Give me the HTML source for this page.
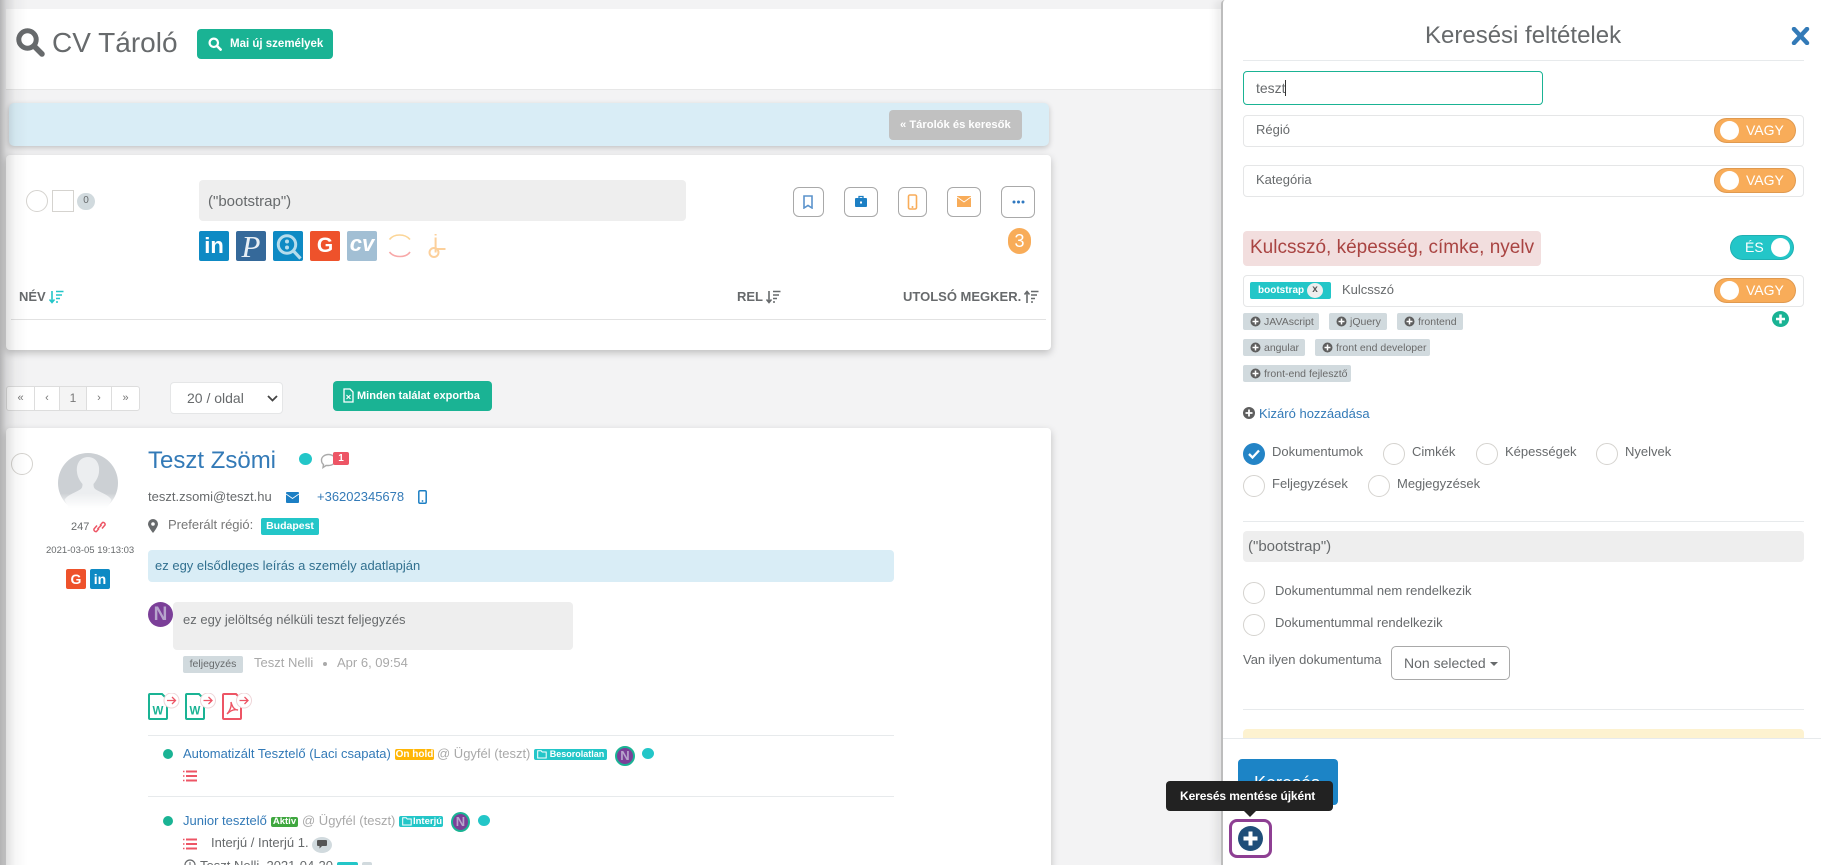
<!DOCTYPE html>
<html lang="hu"><head><meta charset="utf-8"><title>CV Tároló</title>
<style>
*{box-sizing:border-box}
html,body{margin:0;padding:0;width:1821px;height:865px;overflow:hidden}
body{background:#f3f3f4;font-family:"Liberation Sans",sans-serif;color:#676a6c;font-size:13px}
#root{position:absolute;left:0;top:0;width:1821px;height:865px;overflow:hidden;background:#f3f3f4}
.a{position:absolute}
.t{position:absolute;white-space:nowrap}
.card{position:absolute;background:#fff;border-radius:4px;box-shadow:0 3px 8px rgba(0,0,0,.22)}
.ib{position:absolute;border:1px solid #a9a9a9;border-radius:6px;background:#fff}
.c{position:absolute;width:22px;height:22px;border:1px solid #d5d3cf;border-radius:50%;background:#fff}
.box{position:absolute;left:1243px;width:561px;height:32px;border:1px solid #e5e6e7;border-radius:4px;background:#fff}
.tg{position:absolute;left:1714px;width:82px;height:25px;border-radius:13px;background:#f8ac59;border:1px solid #e09a50;color:#fff;font-size:14px;line-height:23px}
.tg i{position:absolute;left:5px;top:2px;width:19px;height:19px;border-radius:50%;background:#fff}
.tg b{position:absolute;left:31px;top:0;font-weight:normal}
.chip{position:absolute;height:17px;background:#d1dade;border-radius:2px;font-size:10.5px;line-height:18px;color:#6a6a6a;white-space:nowrap;padding-left:21px}
.chip svg{position:absolute;left:7px;top:3px}
.sq{position:absolute;width:30px;height:30px;border-radius:2px;color:#fff;text-align:center;font-weight:bold}
.bd{position:absolute;color:#fff;font-weight:bold;border-radius:2px;white-space:nowrap;text-align:center}
.pg{position:absolute;top:386px;height:25px;border:1px solid #ddd;background:#fff;text-align:center;line-height:22px;font-size:11px;color:#777}
.l{color:#337ab7}
.g{color:#a9a9a9}
.n{position:absolute;border-radius:50%;background:#7b3f98;color:#b7a4cc;text-align:center;font-weight:bold}
.dot{position:absolute;border-radius:50%}
hr{position:absolute;margin:0;border:0;height:1px;background:#e7eaec}
</style></head>
<body>
<div id="root">
<!-- header -->
<div class="a" style="left:6px;top:9px;width:1215px;height:81px;background:#fff;border-bottom:1px solid #e7e7e7"></div>
<svg class="a" style="left:16px;top:28px" width="29" height="29" viewBox="0 0 29 29"><circle cx="11.5" cy="11.5" r="8.7" fill="none" stroke="#676a6c" stroke-width="5"/><path d="M18 18l8 8" stroke="#676a6c" stroke-width="5.5" stroke-linecap="round"/></svg>
<div class="t" style="left:52px;top:26px;font-size:28px;line-height:34px;color:#676a6c">CV Tároló</div>
<div class="a" style="left:197px;top:29px;width:136px;height:30px;background:#1ab394;border-radius:4px"></div>
<svg class="a" style="left:208px;top:37px" width="14" height="14" viewBox="0 0 14 14"><circle cx="5.8" cy="5.8" r="4.2" fill="none" stroke="#fff" stroke-width="2.2"/><path d="M9 9l3.6 3.6" stroke="#fff" stroke-width="2.6" stroke-linecap="round"/></svg>
<div class="t" style="left:230px;top:36px;font-size:11.5px;line-height:16px;font-weight:bold;color:#fff">Mai új személyek</div>

<!-- blue bar -->
<div class="a" style="left:9px;top:103px;width:1040px;height:43px;background:#d9edf6;border-radius:5px;box-shadow:0 2px 6px rgba(0,0,0,.2)"></div>
<div class="a" style="left:889px;top:110px;width:133px;height:30px;background:#c1c1c1;border-radius:4px"></div>
<div class="t" style="left:900px;top:117px;font-size:11.2px;line-height:16px;font-weight:bold;color:#fff">« Tárolók és keresők</div>

<!-- search card -->
<div class="card" style="left:6px;top:155px;width:1045px;height:195px"></div>
<div class="c" style="left:26px;top:190px"></div>
<div class="a" style="left:52px;top:190px;width:22px;height:22px;border:1px solid #d5d3cf;background:#fff"></div>
<div class="a" style="left:77px;top:193px;width:18px;height:17px;background:#d1dade;border-radius:9px;font-size:10px;line-height:16px;text-align:center">0</div>
<div class="a" style="left:199px;top:180px;width:487px;height:41px;background:#eee;border-radius:4px"></div>
<div class="t" style="left:208px;top:193px;font-size:15px;line-height:18px">("bootstrap")</div>

<div class="sq" style="left:199px;top:231px;background:#0e8ac4;font-size:22px;line-height:30px">in</div>
<div class="sq" style="left:236px;top:231px;background:#35699a;font:italic 31px/31px 'Liberation Serif',serif;color:#e8eff5">P</div>
<div class="sq" style="left:273px;top:231px;background:#0e8ac4"></div>
<svg class="a" style="left:273px;top:231px" width="30" height="30" viewBox="0 0 30 30"><circle cx="14" cy="13.5" r="8.7" fill="none" stroke="#b5dcec" stroke-width="3"/><circle cx="14" cy="10.5" r="2" fill="#b5dcec"/><circle cx="14" cy="16.5" r="2" fill="#b5dcec"/><path d="M20.5 20l7 7.5" stroke="#b5dcec" stroke-width="3.2"/></svg>
<div class="sq" style="left:310px;top:231px;background:#ee522b;font-size:21px;line-height:30px">G</div>
<div class="sq" style="left:347px;top:231px;background:#a2bfd4;font-size:22px;line-height:26px;font-style:italic">cv</div>
<svg class="a" style="left:387px;top:233px" width="26" height="26" viewBox="0 0 26 26" fill="none"><path d="M2.500 6.500C7 .5 18 .5 23 6.500" stroke="#fbd597" stroke-width="1.600"/><path d="M2.500 19C7 25 19 25 23 19" stroke="#f8a8a8" stroke-width="1.600"/></svg>
<svg class="a" style="left:427px;top:234px" width="19" height="25" viewBox="0 0 19 25" fill="none" stroke="#fcd09b" stroke-width="2"><path d="M8.600 0v1.500M8.600 3.500v15"/><circle cx="7" cy="18.500" r="4.500"/><path d="M8.600 15H18.500"/></svg>

<div class="ib" style="left:793px;top:187px;width:31px;height:30px"></div>
<svg class="a" style="left:802px;top:195px" width="12" height="14" viewBox="0 0 12 14"><path d="M2 1h8v12l-4-2.500L2 13z" fill="none" stroke="#5b93cc" stroke-width="1.600"/></svg>
<div class="ib" style="left:844px;top:187px;width:34px;height:30px"></div>
<svg class="a" style="left:854px;top:195px" width="14" height="13" viewBox="0 0 14 13"><path d="M5 3V1.500h4V3" fill="none" stroke="#1c7fc4" stroke-width="1.300"/><rect x="1" y="3" width="12" height="9" rx="1" fill="#1c7fc4"/><rect x="6" y="6.500" width="2" height="2" fill="#fff"/></svg>
<div class="ib" style="left:898px;top:187px;width:29px;height:30px"></div>
<svg class="a" style="left:907px;top:194px" width="11" height="16" viewBox="0 0 11 16"><rect x="1.500" y="1" width="8" height="14" rx="1.500" fill="none" stroke="#f8ac59" stroke-width="1.600"/><circle cx="5.500" cy="13" r="1" fill="#f8ac59"/></svg>
<div class="ib" style="left:947px;top:187px;width:34px;height:30px"></div>
<svg class="a" style="left:957px;top:196px" width="14" height="11" viewBox="0 0 14 11"><rect width="14" height="11" fill="#f8ac59"/><path d="M0 1l7 5 7-5" fill="none" stroke="#fff" stroke-width=".9"/></svg>
<div class="ib" style="left:1001px;top:186px;width:34px;height:32px"></div>
<svg class="a" style="left:1012px;top:200px" width="13" height="4" viewBox="0 0 13 4" fill="#2f78c0"><circle cx="2" cy="2" r="1.500"/><circle cx="6.500" cy="2" r="1.500"/><circle cx="11" cy="2" r="1.500"/></svg>
<div class="a" style="left:1008px;top:228px;width:23px;height:26px;background:#f8ac59;border-radius:12px;color:#fff;text-align:center;font-size:18px;line-height:26px">3</div>

<div class="t" style="left:19px;top:289px;font-size:13px;line-height:16px;font-weight:bold">NÉV</div>
<svg class="a" style="left:49px;top:290px" width="15" height="14" viewBox="0 0 15 14" stroke="#23c6c8" stroke-width="1.600" fill="none"><path d="M3 1v11M.5 9.500L3 12.500l2.500-3M7 1.500h7.500M7 5h6M7 8.500h4M7 12h2"/></svg>
<div class="t" style="left:737px;top:289px;font-size:13px;line-height:16px;font-weight:bold">REL</div>
<svg class="a" style="left:766px;top:290px" width="15" height="14" viewBox="0 0 15 14" stroke="#676a6c" stroke-width="1.600" fill="none"><path d="M3 1v11M.5 9.500L3 12.500l2.500-3M7 1.500h7.500M7 5h6M7 8.500h4M7 12h2"/></svg>
<div class="t" style="left:903px;top:289px;font-size:13px;line-height:16px;font-weight:bold">UTOLSÓ MEGKER.</div>
<svg class="a" style="left:1024px;top:290px" width="15" height="14" viewBox="0 0 15 14" stroke="#676a6c" stroke-width="1.600" fill="none"><path d="M3 13V2M.5 4.500L3 1.500l2.500 3M7 1.500h7.500M7 5h6M7 8.500h4M7 12h2"/></svg>
<hr style="left:11px;top:319px;width:1035px;background:#e2e2e2">

<!-- pagination -->
<div class="pg" style="left:6px;width:29px;border-radius:3px 0 0 3px">«</div>
<div class="pg" style="left:34px;width:26px">‹</div>
<div class="pg" style="left:59px;width:28px;background:#f4f4f4;font-size:12px">1</div>
<div class="pg" style="left:86px;width:26px">›</div>
<div class="pg" style="left:111px;width:29px;border-radius:0 3px 3px 0">»</div>
<div class="a" style="left:170px;top:382px;width:113px;height:32px;background:#fff;border:1px solid #e5e6e7;border-radius:4px"></div>
<div class="t" style="left:187px;top:389px;font-size:14px;line-height:18px">20 / oldal</div>
<svg class="a" style="left:267px;top:395px" width="11" height="7" viewBox="0 0 11 7"><path d="M1 1l4.500 4.500L10 1" fill="none" stroke="#444" stroke-width="1.800"/></svg>
<div class="a" style="left:333px;top:381px;width:159px;height:30px;background:#1ab394;border-radius:4px"></div>
<svg class="a" style="left:343px;top:388px" width="11" height="15" viewBox="0 0 11 15"><path d="M1 1h6l3 3v10H1z" fill="none" stroke="#fff" stroke-width="1.300"/><path d="M3.500 7l4 4M7.500 7l-4 4" stroke="#fff" stroke-width="1.100"/></svg>
<div class="t" style="left:357px;top:388px;font-size:11px;line-height:16px;font-weight:bold;color:#fff">Minden találat exportba</div>

<!-- result card -->
<div class="card" style="left:6px;top:428px;width:1045px;height:460px"></div>
<div class="c" style="left:11px;top:453px"></div>
<svg class="a" style="left:58px;top:453px" width="60" height="56" viewBox="0 0 60 56">
<defs><linearGradient id="f" x1="0" y1="0" x2="0" y2="1"><stop offset=".72" stop-color="#fff" stop-opacity="0"/><stop offset=".98" stop-color="#fff"/></linearGradient></defs>
<circle cx="30" cy="30" r="30" fill="#ccd0d4"/>
<path d="M30 4c-8 0-12 7-11 15 .4 5 3 9 5.500 12 0 4-1 5-5 7-6 3-11 5-13 9l5 9h37l5-9c-2-4-7-6-13-9-4-2-5-3-5-7 2.500-3 5-7 5.500-12 1-8-3-15-11-15z" fill="#eceef0"/>
<rect width="60" height="56" fill="url(#f)"/></svg>
<div class="t" style="left:71px;top:520px;font-size:11px;line-height:14px">247</div>
<svg class="a" style="left:93px;top:520px" width="13" height="14" viewBox="0 0 13 14" fill="none" stroke="#ed5565" stroke-width="1.500"><path d="M6 8.500l-2.500 3a2 2 0 0 1-2.500-2.500l3-3.500"/><path d="M7 5.500l2.500-3a2 2 0 0 1 2.500 2.500l-3 3.500"/><path d="M4.500 9l4-4"/></svg>
<div class="t" style="left:46px;top:545px;font-size:9.500px;line-height:12px">2021-03-05 19:13:03</div>
<div class="sq" style="left:66px;top:569px;width:20px;height:20px;background:#ee522b;font-size:14px;line-height:20px">G</div>
<div class="sq" style="left:90px;top:569px;width:20px;height:20px;background:#0e8ac4;font-size:14px;line-height:20px">in</div>

<div class="t l" style="left:148px;top:447px;font-size:24px;line-height:28px">Teszt Zsömi</div>
<div class="dot" style="left:299px;top:453px;width:13px;height:12px;background:#23c6c8"></div>
<svg class="a" style="left:320px;top:453px" width="17" height="16" viewBox="0 0 17 16"><path d="M8.500 1.500c4 0 7 2.500 7 5.500s-3 5.500-7 5.500H6l-3 2 .5-3C2 10.500 1.500 9 1.500 7c0-3 3-5.500 7-5.500z" fill="none" stroke="#aaa" stroke-width="1.400"/></svg>
<div class="a" style="left:333px;top:452px;width:16px;height:13px;background:#ed5565;border-radius:2px;color:#fff;font-size:10px;font-weight:bold;line-height:13px;text-align:center">1</div>

<div class="t" style="left:148px;top:489px;font-size:13px;line-height:16px">teszt.zsomi@teszt.hu</div>
<svg class="a" style="left:286px;top:492px" width="13" height="11" viewBox="0 0 13 11"><rect width="13" height="11" rx="1" fill="#1c7fc4"/><path d="M0 2l6.500 4.500L13 2" fill="none" stroke="#fff" stroke-width=".9"/></svg>
<div class="t l" style="left:317px;top:489px;font-size:13px;line-height:16px">+36202345678</div>
<svg class="a" style="left:418px;top:490px" width="9" height="14" viewBox="0 0 9 14"><rect x=".8" y=".8" width="7.400" height="12.400" rx="1.200" fill="none" stroke="#1c7fc4" stroke-width="1.500"/><circle cx="4.500" cy="11" r=".9" fill="#1c7fc4"/></svg>
<svg class="a" style="left:148px;top:519px" width="10" height="14" viewBox="0 0 10 14"><path d="M5 0a5 5 0 0 0-5 5c0 3 5 9 5 9s5-6 5-9a5 5 0 0 0-5-5z" fill="#676a6c"/><circle cx="5" cy="5" r="1.800" fill="#fff"/></svg>
<div class="t" style="left:168px;top:517px;font-size:13px;line-height:16px;color:#777">Preferált régió:</div>
<div class="bd" style="left:261px;top:518px;width:58px;height:17px;background:#23c6c8;font-size:10.500px;line-height:17px">Budapest</div>
<div class="a" style="left:148px;top:550px;width:746px;height:32px;background:#d9edf6;border-radius:4px"></div>
<div class="t" style="left:155px;top:558px;font-size:13px;line-height:16px;color:#31708f">ez egy elsődleges leírás a személy adatlapján</div>

<div class="n" style="left:148px;top:602px;width:25px;height:25px;font-size:19px;line-height:25px">N</div>
<div class="a" style="left:173px;top:602px;width:400px;height:48px;background:#eee;border-radius:4px"></div>
<div class="t" style="left:183px;top:612px;font-size:13px;line-height:16px">ez egy jelöltség nélküli teszt feljegyzés</div>
<div class="a" style="left:183px;top:656px;width:60px;height:17px;background:#d1dade;border-radius:2px;font-size:10.500px;line-height:17px;text-align:center">feljegyzés</div>
<div class="t g" style="left:254px;top:655px;font-size:13px;line-height:16px">Teszt Nelli</div>
<div class="dot" style="left:323px;top:662px;width:4px;height:4px;background:#aaa"></div>
<div class="t g" style="left:337px;top:655px;font-size:13px;line-height:16px">Apr 6, 09:54</div>

<svg class="a" style="left:148px;top:693px" width="32" height="27" viewBox="0 0 32 27"><path d="M1 8V2a1 1 0 0 1 1-1h12l5 5v19a1 1 0 0 1-1 1H2a1 1 0 0 1-1-1z" fill="#fff" stroke="#1ab394" stroke-width="2"/><text x="4.500" y="21.500" font-family="Liberation Sans" font-size="11.500" font-weight="bold" fill="#1ab394">W</text><circle cx="23.500" cy="7.500" r="7.500" fill="#fff" stroke="#eed5d8"/><path d="M19 7.500h8M24 4L27.500 7.500 24 11" fill="none" stroke="#ed5565" stroke-width="1.300"/></svg>
<svg class="a" style="left:185px;top:693px" width="32" height="27" viewBox="0 0 32 27"><path d="M1 8V2a1 1 0 0 1 1-1h12l5 5v19a1 1 0 0 1-1 1H2a1 1 0 0 1-1-1z" fill="#fff" stroke="#1ab394" stroke-width="2"/><text x="4.500" y="21.500" font-family="Liberation Sans" font-size="11.500" font-weight="bold" fill="#1ab394">W</text><circle cx="23" cy="7.500" r="7.500" fill="#fff" stroke="#eed5d8"/><path d="M18.500 7.500h8M23.500 4L27 7.500 23.500 11" fill="none" stroke="#ed5565" stroke-width="1.300"/></svg>
<svg class="a" style="left:222px;top:693px" width="32" height="27" viewBox="0 0 32 27"><path d="M1 8V2a1 1 0 0 1 1-1h12l5 5v19a1 1 0 0 1-1 1H2a1 1 0 0 1-1-1z" fill="#fff" stroke="#ed5565" stroke-width="2"/><path d="M9 9c1 5-2 10-4 12 3-3 7-5 11-4-4 0-6-4-7-8z" fill="none" stroke="#ed5565" stroke-width="1.400"/><circle cx="22" cy="7.500" r="7.500" fill="#fff" stroke="#eed5d8"/><path d="M17.500 7.500h8M22.500 4L26 7.500 22.500 11" fill="none" stroke="#ed5565" stroke-width="1.300"/></svg>

<hr style="left:148px;top:735px;width:746px">
<div class="dot" style="left:163px;top:749px;width:10px;height:10px;background:#1ab394"></div>
<div class="t l" style="left:183px;top:746px;font-size:13px;line-height:16px">Automatizált Tesztelő (Laci csapata)</div>
<div class="bd" style="left:395px;top:749px;width:39px;height:11px;background:#ffb606;font-size:10px;line-height:11px">On hold</div>
<div class="t g" style="left:437px;top:746px;font-size:13px;line-height:16px">@ Ügyfél (teszt)</div>
<div class="bd" style="left:534px;top:749px;width:73px;height:11px;background:#23c6c8;font-size:9px;line-height:11px;padding-left:13px">Besorolatlan</div>
<svg class="a" style="left:537px;top:750px" width="10" height="9" viewBox="0 0 10 9"><path d="M.7.700h3.500l1 1.300h4v6H.7z" fill="none" stroke="#fff"/></svg>
<div class="n" style="left:615px;top:746px;width:20px;height:20px;border:2px solid #1ab394;font-size:13px;line-height:16px">N</div>
<div class="dot" style="left:642px;top:748px;width:12px;height:11px;background:#23c6c8"></div>
<svg class="a" style="left:183px;top:770px" width="14" height="12" viewBox="0 0 14 12" stroke="#ed5565" stroke-width="2"><path d="M3 1.500h11M3 6h11M3 10.500h11"/><path d="M0 1.500h1.500M0 6h1.500M0 10.500h1.500" stroke-width="1.500"/></svg>

<hr style="left:148px;top:796px;width:746px">
<div class="dot" style="left:163px;top:816px;width:10px;height:10px;background:#1ab394"></div>
<div class="t l" style="left:183px;top:813px;font-size:13px;line-height:16px">Junior tesztelő</div>
<div class="bd" style="left:271px;top:817px;width:27px;height:10px;background:#3fa73f;font-size:9.500px;line-height:10px">Aktív</div>
<div class="t g" style="left:302px;top:813px;font-size:13px;line-height:16px">@ Ügyfél (teszt)</div>
<div class="bd" style="left:399px;top:816px;width:44px;height:11px;background:#23c6c8;font-size:9.500px;line-height:11px;padding-left:13px">Interjú</div>
<svg class="a" style="left:402px;top:817px" width="10" height="9" viewBox="0 0 10 9"><path d="M.7.700h3.500l1 1.300h4v6H.7z" fill="none" stroke="#fff"/></svg>
<div class="n" style="left:451px;top:812px;width:19px;height:20px;border:2px solid #1ab394;font-size:13px;line-height:16px">N</div>
<div class="dot" style="left:478px;top:815px;width:12px;height:11px;background:#23c6c8"></div>
<svg class="a" style="left:183px;top:838px" width="14" height="12" viewBox="0 0 14 12" stroke="#ed5565" stroke-width="2"><path d="M3 1.500h11M3 6h11M3 10.500h11"/><path d="M0 1.500h1.500M0 6h1.500M0 10.500h1.500" stroke-width="1.500"/></svg>
<div class="t" style="left:211px;top:835px;font-size:13px;line-height:16px">Interjú / Interjú 1.</div>
<div class="a" style="left:312px;top:837px;width:20px;height:16px;background:#d1dade;border-radius:50%"></div>
<svg class="a" style="left:317px;top:840px" width="10" height="9" viewBox="0 0 10 9"><path d="M1 0h8a1 1 0 0 1 1 1v4a1 1 0 0 1-1 1H5L2.500 8.500V6H1a1 1 0 0 1-1-1V1a1 1 0 0 1 1-1z" fill="#555"/></svg>
<svg class="a" style="left:184px;top:859px" width="12" height="12" viewBox="0 0 12 12"><circle cx="6" cy="6" r="5" fill="none" stroke="#676a6c" stroke-width="1.200"/><path d="M6 3v3.500" stroke="#676a6c"/></svg>
<div class="t" style="left:200px;top:858px;font-size:13px;line-height:16px">Teszt Nelli, 2021-04-20</div>
<div class="a" style="left:337px;top:862px;width:21px;height:10px;background:#23c6c8;border-radius:2px"></div>
<div class="a" style="left:362px;top:862px;width:10px;height:10px;background:#d1dade;border-radius:2px"></div>

<!-- left shadow -->
<div class="a" style="left:0;top:0;width:28px;height:865px;background:linear-gradient(to right,rgba(0,0,0,.26),rgba(0,0,0,.12) 22%,rgba(0,0,0,.03) 55%,rgba(0,0,0,0))"></div>

<!-- right panel -->
<div class="a" style="left:1221px;top:0;width:600px;height:865px;background:#fff;border-left:2px solid #bdbdbd;box-shadow:-6px 0 8px rgba(0,0,0,.07);border-top-left-radius:4px"></div>
<div class="t" style="left:1425px;top:22px;font-size:24px;line-height:28px">Keresési feltételek</div>
<svg class="a" style="left:1791px;top:27px" width="19" height="18" viewBox="0 0 19 18"><path d="M3 2l13 14M16 2L3 16" stroke="#337ab7" stroke-width="4.500" stroke-linecap="round"/></svg>
<hr style="left:1243px;top:60px;width:561px">
<div class="a" style="left:1243px;top:71px;width:300px;height:34px;border:1px solid #1ab394;border-radius:4px"></div>
<div class="t" style="left:1256px;top:79px;font-size:14px;line-height:18px">teszt</div>
<div class="a" style="left:1285px;top:80px;width:1px;height:16px;background:#333"></div>

<div class="box" style="top:115px"></div>
<div class="t" style="left:1256px;top:122px;font-size:13px;line-height:16px">Régió</div>
<div class="tg" style="top:118px"><i></i><b>VAGY</b></div>
<div class="box" style="top:165px"></div>
<div class="t" style="left:1256px;top:172px;font-size:13px;line-height:16px">Kategória</div>
<div class="tg" style="top:168px"><i></i><b>VAGY</b></div>

<div class="a" style="left:1243px;top:231px;width:298px;height:35px;background:#f2dede;border-radius:4px"></div>
<div class="t" style="left:1250px;top:236px;font-size:19px;line-height:24px;color:#a94442">Kulcsszó, képesség, címke, nyelv</div>
<div class="a" style="left:1730px;top:235px;width:64px;height:25px;border-radius:13px;background:#23c6c8;border:1px solid #1fb0b2"></div>
<div class="t" style="left:1745px;top:238px;font-size:14px;line-height:18px;color:#fff">ÉS</div>
<div class="a" style="left:1771px;top:238px;width:19px;height:19px;background:#fff;border-radius:50%"></div>

<div class="box" style="top:275px"></div>
<div class="a" style="left:1250px;top:282px;width:81px;height:17px;background:#23c6c8;border-radius:2px"></div>
<div class="t" style="left:1258px;top:283px;font-size:10px;line-height:15px;font-weight:bold;color:#fff">bootstrap</div>
<div class="a" style="left:1307px;top:283px;width:16px;height:15px;background:#eee;border-radius:50%;font-size:10px;line-height:13px;font-weight:bold;text-align:center;color:#555">x</div>
<div class="t" style="left:1342px;top:282px;font-size:13px;line-height:16px">Kulcsszó</div>
<div class="tg" style="top:278px"><i></i><b>VAGY</b></div>

<div class="chip" style="left:1243px;top:313px;width:76px"><svg width="11" height="11" viewBox="0 0 11 11"><circle cx="5.500" cy="5.500" r="5" fill="#5e5e5e"/><path d="M5.500 2.500v6M2.500 5.500h6" stroke="#fff" stroke-width="1.500"/></svg>JAVAscript</div>
<div class="chip" style="left:1329px;top:313px;width:58px"><svg width="11" height="11" viewBox="0 0 11 11"><circle cx="5.500" cy="5.500" r="5" fill="#5e5e5e"/><path d="M5.500 2.500v6M2.500 5.500h6" stroke="#fff" stroke-width="1.500"/></svg>jQuery</div>
<div class="chip" style="left:1397px;top:313px;width:66px"><svg width="11" height="11" viewBox="0 0 11 11"><circle cx="5.500" cy="5.500" r="5" fill="#5e5e5e"/><path d="M5.500 2.500v6M2.500 5.500h6" stroke="#fff" stroke-width="1.500"/></svg>frontend</div>
<div class="chip" style="left:1243px;top:339px;width:62px"><svg width="11" height="11" viewBox="0 0 11 11"><circle cx="5.500" cy="5.500" r="5" fill="#5e5e5e"/><path d="M5.500 2.500v6M2.500 5.500h6" stroke="#fff" stroke-width="1.500"/></svg>angular</div>
<div class="chip" style="left:1315px;top:339px;width:115px"><svg width="11" height="11" viewBox="0 0 11 11"><circle cx="5.500" cy="5.500" r="5" fill="#5e5e5e"/><path d="M5.500 2.500v6M2.500 5.500h6" stroke="#fff" stroke-width="1.500"/></svg>front end developer</div>
<div class="chip" style="left:1243px;top:365px;width:108px"><svg width="11" height="11" viewBox="0 0 11 11"><circle cx="5.500" cy="5.500" r="5" fill="#5e5e5e"/><path d="M5.500 2.500v6M2.500 5.500h6" stroke="#fff" stroke-width="1.500"/></svg>front-end fejlesztő</div>
<svg class="a" style="left:1772px;top:311px" width="17" height="16" viewBox="0 0 17 16"><ellipse cx="8.500" cy="8" rx="8.500" ry="8" fill="#1ab394"/><path d="M8.500 3.500v9M4 8h9" stroke="#fff" stroke-width="2.500"/></svg>

<svg class="a" style="left:1243px;top:407px" width="12" height="12" viewBox="0 0 12 12"><circle cx="6" cy="6" r="6" fill="#5e5e5e"/><path d="M6 2.500v7M2.500 6h7" stroke="#fff" stroke-width="1.800"/></svg>
<div class="t l" style="left:1259px;top:406px;font-size:13px;line-height:16px">Kizáró hozzáadása</div>

<div class="dot" style="left:1243px;top:443px;width:22px;height:22px;background:#2484c6"></div>
<svg class="a" style="left:1248px;top:449px" width="12" height="10" viewBox="0 0 12 10"><path d="M1 5l3.500 3.500L11 1.500" fill="none" stroke="#fff" stroke-width="2.300"/></svg>
<div class="t" style="left:1272px;top:444px;font-size:13px;line-height:16px">Dokumentumok</div>
<div class="c" style="left:1383px;top:443px"></div>
<div class="t" style="left:1412px;top:444px;font-size:13px;line-height:16px">Cimkék</div>
<div class="c" style="left:1476px;top:443px"></div>
<div class="t" style="left:1505px;top:444px;font-size:13px;line-height:16px">Képességek</div>
<div class="c" style="left:1596px;top:443px"></div>
<div class="t" style="left:1625px;top:444px;font-size:13px;line-height:16px">Nyelvek</div>
<div class="c" style="left:1243px;top:475px"></div>
<div class="t" style="left:1272px;top:476px;font-size:13px;line-height:16px">Feljegyzések</div>
<div class="c" style="left:1368px;top:475px"></div>
<div class="t" style="left:1397px;top:476px;font-size:13px;line-height:16px">Megjegyzések</div>
<hr style="left:1243px;top:521px;width:561px">

<div class="a" style="left:1243px;top:531px;width:561px;height:31px;background:#eee;border-radius:4px"></div>
<div class="t" style="left:1248px;top:538px;font-size:15px;line-height:18px">("bootstrap")</div>
<div class="c" style="left:1243px;top:582px"></div>
<div class="t" style="left:1275px;top:583px;font-size:13px;line-height:16px">Dokumentummal nem rendelkezik</div>
<div class="c" style="left:1243px;top:614px"></div>
<div class="t" style="left:1275px;top:615px;font-size:13px;line-height:16px">Dokumentummal rendelkezik</div>
<div class="t" style="left:1243px;top:652px;font-size:13px;line-height:16px">Van ilyen dokumentuma</div>
<div class="a" style="left:1391px;top:646px;width:119px;height:34px;border:1px solid #a9a9a9;border-radius:5px"></div>
<div class="t" style="left:1404px;top:654px;font-size:14px;line-height:18px">Non selected</div>
<div class="a" style="left:1490px;top:662px;width:0;height:0;border-left:4px solid transparent;border-right:4px solid transparent;border-top:4px solid #676a6c"></div>
<hr style="left:1243px;top:709px;width:561px">
<div class="a" style="left:1243px;top:729px;width:561px;height:10px;background:#fdf2d0;border-radius:4px 4px 0 0"></div>
<div class="a" style="left:1223px;top:738px;width:598px;height:127px;background:#fff;border-top:1px solid #e7eaec"></div>

<div class="a" style="left:1238px;top:759px;width:100px;height:46px;background:#1c84c6;border-radius:4px"></div>
<div class="t" style="left:1254px;top:772px;font-size:18px;line-height:22px;color:#fff">Keresés</div>
<div class="a" style="left:1166px;top:781px;width:167px;height:30px;background:#222;border-radius:4px"></div>
<div class="t" style="left:1180px;top:788px;font-size:12px;line-height:16px;font-weight:bold;color:#fff;letter-spacing:-.1px">Keresés mentése újként</div>
<div class="a" style="left:1244px;top:811px;width:0;height:0;border-left:6px solid transparent;border-right:6px solid transparent;border-top:6px solid #222"></div>
<div class="a" style="left:1229px;top:819px;width:43px;height:39px;border:3px solid #8e3f93;border-radius:8px;background:#fff"></div>
<svg class="a" style="left:1238px;top:826px" width="25" height="25" viewBox="0 0 25 25"><circle cx="12.500" cy="12.500" r="12.500" fill="#1f4e79"/><path d="M12.500 5.500v14M5.500 12.500h14" stroke="#fff" stroke-width="4"/></svg>
</div>
</body></html>
